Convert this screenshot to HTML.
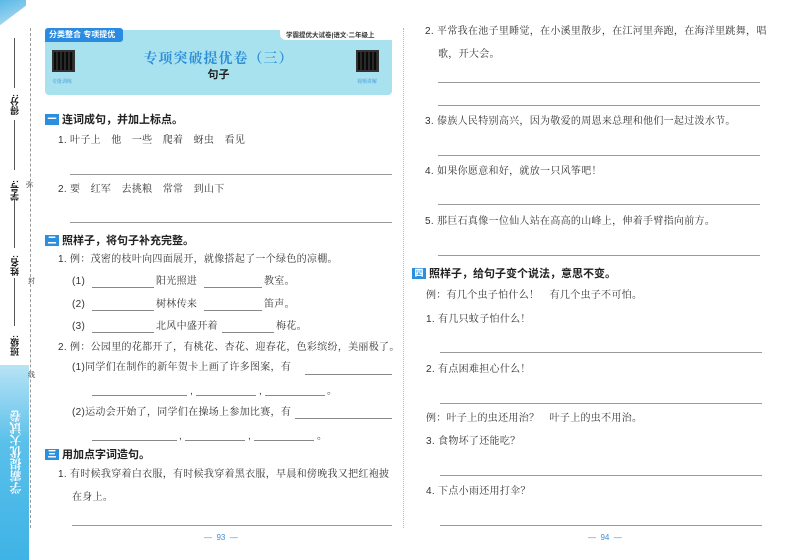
<!DOCTYPE html>
<html><head><meta charset="utf-8"><style>
*{margin:0;padding:0;box-sizing:border-box}
body{width:800px;height:560px;background:#fff;position:relative;overflow:hidden;font-family:"Liberation Sans","Noto Serif CJK SC",serif;color:#333}
.t{position:absolute;font-size:10px;white-space:nowrap;font-family:"Liberation Sans","Noto Serif CJK SC",serif;letter-spacing:0.3px;line-height:12px}
.h{position:absolute;font-size:11px;font-weight:bold;white-space:nowrap;font-family:"Liberation Sans","Noto Sans CJK SC",sans-serif;line-height:12px;color:#222}
.h b{display:inline-block;background:#2b8fe0;color:#fff;font-size:9px;width:14px;height:11px;line-height:11px;text-align:center;margin-right:3px;vertical-align:1px}
.l{position:absolute;height:1px;background:#9a9a9a}
.s{position:absolute;height:1px;background:#888}
.side{position:absolute;font-size:9px;font-weight:bold;writing-mode:vertical-rl;transform:rotate(180deg);font-family:"Liberation Sans","Noto Sans CJK SC",sans-serif;color:#222}
.qr{position:absolute;width:23px;height:22px;background:repeating-linear-gradient(90deg,#333 0 2px,#ccc 2px 4px),#333;background-blend-mode:multiply;border:2px solid #333}
.pn{position:absolute;font-size:8px;color:#3a8fd8;font-family:"Liberation Sans",sans-serif}
</style></head><body>
<div style="position:absolute;left:0;top:0;width:26px;height:28px;background:linear-gradient(160deg,#5ab8e6,#bfe4f5);clip-path:polygon(0 0,100% 0,100% 20%,0 90%)"></div>
<div style="position:absolute;left:0;top:365px;width:29px;height:195px;background:linear-gradient(180deg,#b8e3f5,#59c0ea 40%,#3fb3e6)"></div>
<div style="position:absolute;left:7px;top:410px;font-size:12px;font-weight:bold;color:#fff;writing-mode:vertical-rl;transform:rotate(180deg);font-family:'Noto Serif CJK SC',serif;letter-spacing:0">学霸提优大试卷</div>
<div style="position:absolute;left:30px;top:28px;width:0;height:500px;border-left:1px dashed #999"></div>
<div class="t" style="left:26px;top:180px;font-size:7px;letter-spacing:0">弥</div>
<div class="t" style="left:28px;top:276px;font-size:7px;letter-spacing:0">封</div>
<div class="t" style="left:28px;top:370px;font-size:7px;letter-spacing:0">线</div>
<div class="side" style="left:8px;top:94px">得分:</div>
<div class="side" style="left:8px;top:180px">学号:</div>
<div class="side" style="left:8px;top:255px">姓名:</div>
<div class="side" style="left:8px;top:335px">班级:</div>
<div style="position:absolute;left:14px;top:38px;width:1px;height:50px;background:#555"></div>
<div style="position:absolute;left:14px;top:120px;width:1px;height:50px;background:#555"></div>
<div style="position:absolute;left:14px;top:200px;width:1px;height:48px;background:#555"></div>
<div style="position:absolute;left:14px;top:278px;width:1px;height:48px;background:#555"></div>

<div style="position:absolute;left:45px;top:30px;width:347px;height:65px;background:#a8e2ef;border-radius:4px"></div>
<div style="position:absolute;left:45px;top:28px;width:78px;height:14px;background:#2a8be0;border-radius:3px 3px 3px 0;color:#fff;font-size:8px;font-weight:bold;line-height:14px;padding-left:4px;font-family:'Liberation Sans','Noto Sans CJK SC',sans-serif">分类整合 专项提优</div>
<div style="position:absolute;left:280px;top:28px;width:112px;height:12px;background:#fff;border-radius:0 0 0 6px"></div>
<div class="t" style="left:286px;top:30px;font-size:6.5px;letter-spacing:0;font-weight:bold;font-family:'Liberation Sans','Noto Sans CJK SC',sans-serif">学霸提优大试卷|语文·二年级上</div>
<div class="qr" style="left:52px;top:50px"></div>
<div class="qr" style="left:356px;top:50px"></div>
<div class="t" style="left:52px;top:76px;font-size:5px;color:#3a8fd8;letter-spacing:0">专批训练</div>
<div class="t" style="left:357px;top:76px;font-size:5px;color:#3a8fd8;letter-spacing:0">视频讲解</div>
<div style="position:absolute;left:45px;top:48px;width:347px;text-align:center;font-size:14px;color:#2f8fd6;font-family:'Noto Serif CJK SC',serif;font-weight:bold;letter-spacing:1px">专项突破提优卷（三）</div>
<div style="position:absolute;left:45px;top:66px;width:347px;text-align:center;font-size:11px;font-weight:bold;font-family:'Liberation Sans','Noto Sans CJK SC',sans-serif;color:#222">句子</div>

<div class="h" style="left:45px;top:114px"><b>一</b>连词成句，并加上标点。</div>
<div class="t" style="left:58px;top:135px">1. 叶子上　他　一些　爬着　蚜虫　看见</div>
<div class="l" style="left:70px;top:174px;width:322px"></div>
<div class="t" style="left:58px;top:184px">2. 要　红军　去挑粮　常常　到山下</div>
<div class="l" style="left:70px;top:222px;width:322px"></div>
<div class="h" style="left:45px;top:235px"><b>二</b>照样子，将句子补充完整。</div>
<div class="t" style="left:58px;top:254px">1. 例：茂密的枝叶向四面展开，就像搭起了一个绿色的凉棚。</div>
<div class="t" style="left:72px;top:276px">(1)</div><div class="s" style="left:92px;top:287px;width:62px"></div><div class="t" style="left:156px;top:276px">阳光照进</div><div class="s" style="left:204px;top:287px;width:58px"></div><div class="t" style="left:264px;top:276px">教室。</div>
<div class="t" style="left:72px;top:299px">(2)</div><div class="s" style="left:92px;top:310px;width:62px"></div><div class="t" style="left:156px;top:299px">树林传来</div><div class="s" style="left:204px;top:310px;width:58px"></div><div class="t" style="left:264px;top:299px">笛声。</div>
<div class="t" style="left:72px;top:321px">(3)</div><div class="s" style="left:92px;top:332px;width:62px"></div><div class="t" style="left:156px;top:321px">北风中盛开着</div><div class="s" style="left:222px;top:332px;width:52px"></div><div class="t" style="left:276px;top:321px">梅花。</div>
<div class="t" style="left:58px;top:342px">2. 例：公园里的花都开了，有桃花、杏花、迎春花，色彩缤纷，美丽极了。</div>
<div class="t" style="left:72px;top:362px">(1)同学们在制作的新年贺卡上画了许多图案，有</div><div class="s" style="left:305px;top:374px;width:87px"></div>
<div class="s" style="left:92px;top:395px;width:95px"></div><div class="t" style="left:190px;top:386px">,</div><div class="s" style="left:196px;top:395px;width:60px"></div><div class="t" style="left:259px;top:386px">,</div><div class="s" style="left:265px;top:395px;width:60px"></div><div class="t" style="left:327px;top:386px">。</div>
<div class="t" style="left:72px;top:407px">(2)运动会开始了，同学们在操场上参加比赛，有</div><div class="s" style="left:295px;top:418px;width:97px"></div>
<div class="s" style="left:92px;top:440px;width:85px"></div><div class="t" style="left:179px;top:431px">,</div><div class="s" style="left:185px;top:440px;width:60px"></div><div class="t" style="left:248px;top:431px">,</div><div class="s" style="left:254px;top:440px;width:60px"></div><div class="t" style="left:317px;top:431px">。</div>
<div class="h" style="left:45px;top:449px"><b>三</b>用加点字词造句。</div>
<div class="t" style="left:58px;top:469px">1. 有时候我穿着白衣服，有时候我穿着黑衣服，早晨和傍晚我又把红袍披</div>
<div class="t" style="left:72px;top:492px">在身上。</div>
<div class="l" style="left:72px;top:525px;width:320px"></div>
<div class="pn" style="left:204px;top:533px">—&nbsp; 93 &nbsp;—</div>

<div style="position:absolute;left:403px;top:28px;width:0;height:500px;border-left:1px dotted #7cc6ea"></div>

<div class="t" style="left:425px;top:26px">2. 平常我在池子里睡觉，在小溪里散步，在江河里奔跑，在海洋里跳舞，唱</div>
<div class="t" style="left:438px;top:49px">歌，开大会。</div>
<div class="l" style="left:438px;top:82px;width:322px"></div>
<div class="l" style="left:438px;top:105px;width:322px"></div>
<div class="t" style="left:425px;top:116px">3. 傣族人民特别高兴，因为敬爱的周恩来总理和他们一起过泼水节。</div>
<div class="l" style="left:438px;top:155px;width:322px"></div>
<div class="t" style="left:425px;top:166px">4. 如果你愿意和好，就放一只风筝吧！</div>
<div class="l" style="left:438px;top:204px;width:322px"></div>
<div class="t" style="left:425px;top:216px">5. 那巨石真像一位仙人站在高高的山峰上，伸着手臂指向前方。</div>
<div class="l" style="left:438px;top:255px;width:322px"></div>
<div class="h" style="left:412px;top:268px"><b>四</b>照样子，给句子变个说法，意思不变。</div>
<div class="t" style="left:426px;top:290px">例：有几个虫子怕什么！　有几个虫子不可怕。</div>
<div class="t" style="left:426px;top:314px">1. 有几只蚊子怕什么！</div>
<div class="l" style="left:440px;top:352px;width:322px"></div>
<div class="t" style="left:426px;top:364px">2. 有点困难担心什么！</div>
<div class="l" style="left:440px;top:403px;width:322px"></div>
<div class="t" style="left:426px;top:413px">例：叶子上的虫还用治？　叶子上的虫不用治。</div>
<div class="t" style="left:426px;top:436px">3. 食物坏了还能吃？</div>
<div class="l" style="left:440px;top:475px;width:322px"></div>
<div class="t" style="left:426px;top:486px">4. 下点小雨还用打伞？</div>
<div class="l" style="left:440px;top:525px;width:322px"></div>
<div class="pn" style="left:588px;top:533px">—&nbsp; 94 &nbsp;—</div>
</body></html>
